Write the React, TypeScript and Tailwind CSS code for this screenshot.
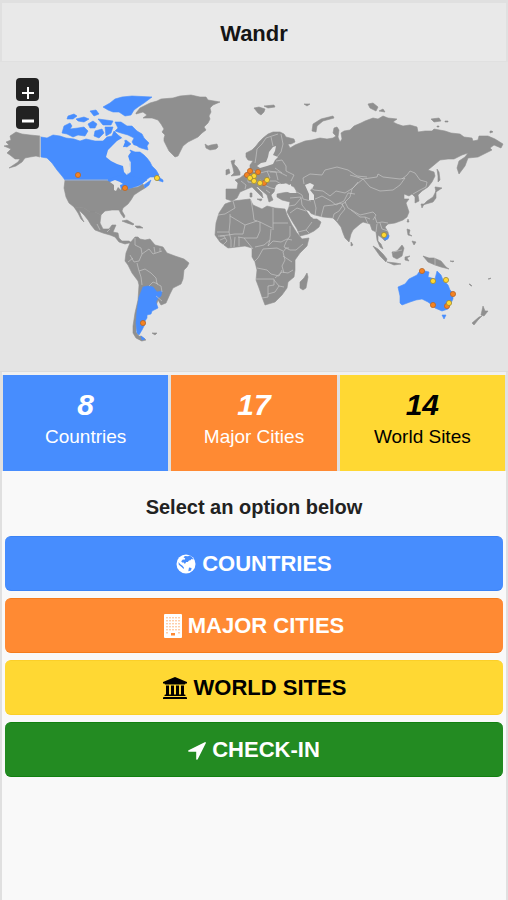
import React from 'react';

const BLUE = '#478dfe';
const ORANGE = '#ff8a33';
const YELLOW = '#ffd833';

const land: string[] = [
  // Alaska
  'M4 146L9 145 6 142 11 140 10 136 16 132 22 134 30 135 40 136 40 157 36 156 30 157 25 158 22 162 16 166 9 168 18 162 20 159 15 159 10 155 7 153 11 149z',
  // United States
  'M65 180L107 180 112 181 115 186 119 187 122 186 126 189 132 188 138 187 143 184 145 188 140 191 134 195 131 200 128 204 123 208 122 211 125 216 124 218 121 214 119 210 112 210 105 211 101 215 95 212 90 212 84 208 74 207 69 203 66 197 64 188z',
  // Mexico and Central America
  'M74 207L84 208 90 212 95 212 101 215 100 223 103 229 109 229 112 225 116 225 113 232 118 233 119 238 122 241 129 241 132 243 129 243 125 244 119 242 115 237 110 235 103 233 95 230 91 225 88 220 84 215 79 210 81 216 84 222 81 219 78 213z',
  // South America
  'M130 243L135 237 138 237 140 239 145 240 150 239 155 245 163 247 167 253 175 256 184 259 189 263 187 267 184 270 183 279 181 284 173 288 170 294 166 303 161 305 158 300 156 306 140 312 137 320 136 332 139 336 142 341 136 338 133 333 133 326 135 313 138 300 139 285 138 281 132 273 128 265 125 261 126 253z',
  // Tierra del Fuego
  'M136 337L141 336 146 340 142 341z',
  // Greenland
  'M136 113L140 108 146 105 150 103 157 101 161 99 173 98 180 96 191 95 200 97 206 97 208 100 220 102 213 105 210 108 211 112 209 116 210 119 208 123 204 127 206 130 202 133 198 137 192 140 188 142 183 146 181 150 178 156 175 157 172 154 169 151 167 147 164 141 164 138 165 135 162 132 164 129 161 124 158 120 152 118 143 118 147 115 143 112 136 114z',
  // Iceland
  'M205 144L208 146 211 145 217 144 218 147 216 149 210 150 206 148z',
  // Eurasia
  'M248 160L246 157 246 153 252 150 256 146 259 142 263 138 268 134 273 132 280 132 284 134 286 137 294 139 295 142 291 144 288 144 290 148 295 145 300 143 305 141 312 140 320 138 327 139 333 138 336 136 333 133 334 128 337 127 339 130 338 137 340 142 342 139 341 133 344 131 350 130 354 126 361 123 365 121 373 118 378 119 383 116 388 118 397 119 393 122 397 124 403 126 410 125 417 127 418 132 425 131 432 131 434 129 445 131 451 133 460 134 464 137 472 138 473 141 478 140 479 136 488 136 495 139 503 144 501 148 494 145 490 148 492 150 486 153 478 157 468 158 465 166 459 174 457 168 459 161 465 157 468 153 462 155 454 159 448 159 440 160 434 165 428 170 434 172 435 176 432 182 428 187 422 191 418 195 419 201 415 203 415 197 412 194 409 196 404 194 404 199 409 199 406 203 408 209 409 212 407 217 403 220 395 223 388 224 385 227 388 232 389 237 385 241 382 238 378 235 378 241 381 244 383 249 380 247 377 240 376 232 372 230 370 224 363 222 360 224 353 230 351 234 349 242 345 238 343 233 341 227 337 222 333 218 323 217 315 215 310 213 313 219 317 219 321 222 319 227 314 231 308 234 300 236 297 229 292 221 287 212 289 207 290 202 282 200 277 197 277 194 282 193 288 192 297 192 294 187 286 183 276 185 274 192 271 195 273 200 269 202 267 195 261 190 258 187 256 187 262 193 263 198 258 193 252 187 247 189 240 192 237 198 232 201 226 199 226 189 237 189 238 183 235 180 240 178 245 174 250 171 250 165 253 161z',
  // United Kingdom and Ireland
  'M231 161L235 160 234 164 237 167 240 172 240 175 231 176 234 173 233 168z',
  'M226 170L229 169 230 173 226 175z',
  // Italian islands
  'M250 193L252 193 252 197 250 197z',
  'M257 199L262 199 261 201z',
  // Africa
  'M225 204L233 201 250 199 253 205 262 209 267 206 275 208 285 209 287 215 292 225 297 233 302 239 309 238 307 246 300 253 295 260 295 270 294 277 288 282 287 288 282 295 275 302 265 305 262 297 259 288 256 280 257 270 255 262 252 257 252 248 245 246 237 247 228 248 220 242 215 235 216 223 219 213z',
  // Madagascar
  'M307 273L308 277 306 288 303 290 300 288 300 282 304 278z',
  // Svalbard and Arctic islands
  'M254 108L259 107 265 109 264 112 261 115 258 113z',
  'M264 106L274 105 275 107 268 108z',
  'M304 104L310 104 307 106z',
  'M312 131L313 124 321 119 333 116 334 118 323 121 317 126 316 132z',
  'M368 104L373 103 378 107 376 111 370 108z',
  'M379 111L383 109 385 112z',
  'M431 119L439 118 441 121 434 122z',
  'M445 121h3v1h-3zM437 126h2v1h-2zM490 131l2 0 1 1-3 1z',
  // Japan and Sakhalin
  'M437 169L439 172 440 180 438 182 438 176z',
  'M436 187L442 188 439 190 436 192 435 187z',
  'M436 191L436 198 433 202 426 204 423 205 427 201 433 197z',
  'M421 204L424 204 422 208z',
  // South-east Asia
  'M373 246L378 249 383 254 387 259 386 262 380 256z',
  'M387 262L396 263 401 264 394 265z',
  'M392 252L397 251 402 245 404 248 402 256 397 259 393 257z',
  'M405 257L410 256 407 258 409 261 405 260z',
  'M407 229L410 230 409 234 412 236 408 235z',
  'M412 241L416 242 414 245z',
  'M423 256L429 258 434 258 441 261 446 267 449 269 441 267 435 265 428 262z',
  'M408 219L409 222 407 222z',
  'M351 242L353 245 351 246z',
  // New Zealand and the Pacific
  'M472 323L479 317 482 316 478 320 474 325z',
  'M483 306L485 311 488 311 484 316 481 315z',
  'M469 284h1l2 2h-1zM488 279l3-1-1 1zM450 261l4 0-1 1z',
  // Caribbean
  'M122 221L127 220 134 224 133 225 127 223z',
  'M135 226L140 226 143 228 137 228z',
  // Falklands
  'M152 333L157 333 155 335z',
];

const visited: string[] = [
  // Canada mainland
  'M41 137L47 138 53 135 60 136 66 138 74 139 80 141 86 139 95 141 103 141 107 137 112 136 114 131 118 135 122 138 120 142 126 144 122 150 130 160 127 175 131 172 131 162 128 157 130 150 135 152 140 152 144 155 147 158 150 162 152 166 156 170 159 175 155 177 150 177 146 180 142 184 138 186 130 188 124 190 120 186 114 183 107 180 65 180 62 176 57 170 52 163 47 158 41 157z',
  'M107 180L117 176 131 176 142 179 147 180 140 184 131 188 121 188 114 183z',
  // Ellesmere
  'M103 107L110 103 115 99 122 97 132 96 152 97 144 103 138 107 134 110 131 115 125 116 119 112 113 112 108 110z',
  // Baffin
  'M115 122L121 122 127 126 132 126 137 131 142 134 144 138 149 143 147 146 148 150 141 148 134 145 132 142 134 138 128 135 121 133 115 131 118 128z',
  // Victoria and Banks
  'M62 133L64 126 70 123 72 126 70 129 78 128 84 127 88 131 85 136 78 135 73 137 67 134z',
  // smaller islands
  'M68 116L74 114 77 116 73 119 67 119z',
  'M76 119L84 117 89 119 84 122 78 121z',
  'M90 111L96 110 99 114 94 116z',
  'M88 124L93 121 97 124 95 128 90 128z',
  'M98 119L106 120 113 121 111 125 103 125z',
  'M95 131L102 129 104 133 99 138 94 136z',
  'M105 127L113 127 111 133 106 136z',
  'M121 143L126 140 131 144 127 147 122 146z',
  // Newfoundland and Nova Scotia
  'M154 176L158 175 160 178 163 180 163 182 157 180z',
  'M144 185L151 180 149 185 145 188z',
  // Argentina
  'M143 287L148 286 153 287 157 292 162 291 161 296 158 298 156 302 158 308 152 311 151 314 147 315 147 318 145 321 145 324 142 330 139 335 137 333 136 323 137 310 139 297z',
  'M141 336L145 339 142 340z',
  // Australia
  'M398 287L405 284 409 279 413 277 417 275 419 272 425 271 429 272 428 277 435 279 437 271 441 275 443 280 448 285 450 290 453 293 453 299 450 305 448 309 442 311 435 308 432 305 428 302 422 299 416 300 410 302 402 305 400 303 400 296z',
  'M442 315L446 315 444 319z',
  // Cambodia
  'M384 236L389 235 388 239 385 240z',
];

const seas: string[] = [
  // Hudson Bay
  'M106 157L108 150 113 145 117 141 122 138 125 142 123 147 127 148 131 152 128 156 130 162 129 170 127 175 124 172 123 166 117 164 111 161z',
  // Great Lakes
  'M110 182L115 180 120 182 123 184 120 185 121 190 118 187 116 191 114 190 114 185z',
  'M132 145L137 146 139 149 134 150z',
  // Baltic
  'M257 166L261 163 266 162 268 157 269 152 273 147 276 146 275 151 273 155 278 157 275 160 273 164 267 166 260 168z',
  // Black Sea
  'M275 188L278 184 285 184 286 187 288 186 291 184 291 187 297 193 290 193 285 191 276 192z',
  // Caspian
  'M305 185L310 183 314 185 312 189 310 190 314 195 314 200 309 200 309 194z',
  // Persian Gulf
  'M306 210L309 211 314 218 311 217z',
];

const borders: string[] = [
  // Europe
  'M255 163L256 157 257 149 262 144 266 138 272 136 278 134',
  'M271 137L273 146M281 134L283 144 281 152 277 157',
  'M241 181L246 185 245 189M248 174L248 182 255 183 261 180M253 171L260 173 268 171 276 172 278 180M267 171L270 178 264 182M276 161L282 160 286 166 286 171 294 175 291 181',
  'M261 181L276 181 281 184M264 185L271 188 276 189M266 190L270 193M275 168L282 173M270 172L279 172 287 176',
  // Central Asia
  'M303 178L310 174 322 175 325 170 337 167 348 170 357 176 367 177',
  'M303 178L304 184M358 182L353 188 345 193 336 191 330 196 323 191 314 190 311 188',
  'M315 199L322 196 331 201 336 205 344 201 348 193 355 194',
  'M314 200L316 208 315 216M321 217L324 206 333 205 340 203 343 205 339 211 334 214 333 218',
  'M337 221L340 215 345 209 342 204 346 202',
  'M345 202L348 208 360 215 373 212 376 215 373 220M351 210L360 217 365 217 368 224M365 217L370 219',
  // China and Mongolia
  'M350 175L357 177 363 179 377 177 378 174 383 177 400 179 405 178 400 185 393 190 380 191 370 187 363 179 357 184 352 189 350 197 345 202',
  'M402 179L407 175 410 171 415 173 420 180 427 182 426 187 420 190 413 194',
  'M375 217L377 223 382 222 388 223M380 223L382 229 388 231M377 224L376 232',
  // Middle East
  'M290 198L301 197 302 205 306 210M297 192L302 195 303 199 311 201M289 206L295 205 301 198M290 213L297 208 306 211M298 232L306 230 312 222M306 230L309 233',
  // Africa
  'M233 201L235 208 225 214 218 215M230 214L230 222 229 232 217 232M230 216L245 225 257 221M251 200L253 212 254 220 260 222 272 228M273 208L273 230M273 223L288 223M245 225L243 234 235 234 228 235 220 236',
  'M260 222L260 231 257 238 244 238 238 237M271 229L270 240 264 245 255 247M270 240L268 246 273 241 281 242 287 239 292 240',
  'M290 226L290 236 286 242 284 247 290 250 296 250 303 244M289 248L286 248 283 252 285 260 282 266 284 273M283 256L292 262M263 249L258 258 254 262M263 249L277 248 283 251M257 268L267 270 271 274 279 276 282 270',
  'M256 279L274 279 274 285 268 286 268 297 262 298M274 280L279 286 275 292 268 294M279 286L284 287M275 278L282 272 288 273 293 270',
  'M218 236L224 236 227 241 223 245M229 232L231 240 231 247M235 237L234 247M239 237L239 246M244 238L253 249M220 240L225 238',
  // South America
  'M135 238L135 245 141 248 142 254 139 261 134 262 130 255M142 254L149 249 153 254 162 251M154 247L155 253M160 248L160 252M137 263L139 271 145 269 151 273 156 278 157 284 161 286 162 292M142 285L141 277 139 271M149 286L153 282 158 284M156 296L162 301M128 262L133 258',
  // North America
  'M40 136V157M65 180H108M97 224L100 230M107 232L110 229',
  // South-east Asia
  'M393 252L402 250M435 258L435 265',
];

const pins = [
  { x: 78, y: 175, kind: 'city' },
  { x: 125, y: 188, kind: 'city' },
  { x: 143, y: 323, kind: 'city' },
  { x: 157, y: 178, kind: 'site' },
  { x: 247, y: 175, kind: 'city' },
  { x: 250, y: 171, kind: 'city' },
  { x: 258, y: 172, kind: 'city' },
  { x: 254, y: 176, kind: 'site' },
  { x: 250, y: 178, kind: 'site' },
  { x: 264, y: 183, kind: 'city' },
  { x: 254, y: 181, kind: 'site' },
  { x: 260, y: 183, kind: 'site' },
  { x: 267, y: 180, kind: 'site' },
  { x: 384, y: 235, kind: 'site' },
  { x: 422, y: 271, kind: 'city' },
  { x: 433, y: 281, kind: 'site' },
  { x: 446, y: 280, kind: 'site' },
  { x: 453, y: 294, kind: 'city' },
  { x: 433, y: 305, kind: 'city' },
  { x: 447, y: 306, kind: 'city' },
  { x: 449, y: 303, kind: 'site' },
];

const GlobeIcon = () => (
  <svg viewBox="0 0 20 20" className="h-5 w-5" aria-hidden="true">
    <circle cx="10" cy="10" r="9.5" fill="white" />
    <path
      fill={BLUE}
      d="M9 2l3 .3 1.500-.8 2.500 1.500 1.500 2.500-2-.5-1 1.200-1.500.3-1.200 1.600-1.600-.2-1.300 2-1.200-1.500-1.500.2-1-1.400 1.700-1.800 1.600.4.8-1.300-1.800-1.200z"
    />
    <path fill={BLUE} d="M2.500 8l1.800 2.200 2.200 1.500 1.500 2-.4 1.200-2-2-2.800-2.200zM13 13.500l2.600.6-.6 2.400-2.700.8z" />
  </svg>
);

const BuildingIcon = () => (
  <svg viewBox="0 0 18 24" className="h-6 w-[18px]" aria-hidden="true">
    <rect width="18" height="24" rx="1" fill="white" />
    {[3, 6, 9, 12, 15].map((y) =>
      [3, 6, 9, 12, 15].map((x) => (
        <rect key={`${x}-${y}`} x={x - 0.7} y={y} width="1.4" height="1.4" fill={ORANGE} opacity="0.6" />
      ))
    )}
    <path d="M2.300 18h1.400v1.400H2.300zM14.300 18h1.400v1.400h-1.400z" fill={ORANGE} opacity="0.6" />
    <rect x="7" y="19" width="4" height="2.500" fill={ORANGE} />
  </svg>
);

const MuseumIcon = () => (
  <svg viewBox="0 0 26 24" className="h-6 w-[26px]" aria-hidden="true">
    <path
      fill="black"
      d="M13 1l12 5v1.500h-1.500q0 1-1 1h-19q-1 0-1-1H1V6zM4 9.500h3v9h2v-9h3v9h2v-9h3v9h2v-9h3v9h.5q1 0 1 1v.5h-21v-.5q0-1 1-1H4zM2 21h22q1 0 1 1v1H1v-1q0-1 1-1z"
    />
  </svg>
);

const ArrowIcon = () => (
  <svg viewBox="180 100 1430 1570" className="h-5 w-[18px]" aria-hidden="true">
    <path
      fill="white"
      d="M1593 349l-640 1280q-17 35-57 35-5 0-15-2-22-5-35.500-22.500t-13.500-39.500v-576h-576q-22 0-39.500-13.500t-22.500-35.500 4-42 29-30l1280-640q13-7 29-7 27 0 45 19 15 14 18.500 34.500t-6.500 39.500z"
    />
  </svg>
);

const stats = [
  { value: 8, label: 'Countries', className: 'bg-[#478dfe] text-white' },
  { value: 17, label: 'Major Cities', className: 'bg-[#ff8a33] text-white' },
  { value: 14, label: 'World Sites', className: 'bg-[#ffd833] text-black' },
];

const options = [
  { label: 'COUNTRIES', Icon: GlobeIcon, className: 'bg-[#478dfe] border-[#3b83f5] text-white' },
  { label: 'MAJOR CITIES', Icon: BuildingIcon, className: 'bg-[#ff8a33] border-[#f57c1c] text-white' },
  { label: 'WORLD SITES', Icon: MuseumIcon, className: 'bg-[#ffd833] border-[#fbcf28] text-black' },
  { label: 'CHECK-IN', Icon: ArrowIcon, className: 'bg-[#238b22] border-[#118010] text-white' },
];

const WorldMap: React.FC = () => (
  <svg viewBox="0 62 508 309" className="block w-full" role="img" aria-label="World map">
    <g fill="#8f8f8f" stroke="#8f8f8f" strokeWidth="0.6" strokeLinejoin="round">
      {land.map((d) => (
        <path key={d} d={d} />
      ))}
    </g>
    <g fill={BLUE} stroke={BLUE} strokeWidth="0.6" strokeLinejoin="round">
      {visited.map((d) => (
        <path key={d} d={d} />
      ))}
    </g>
    <g fill="#e4e4e4">
      {seas.map((d) => (
        <path key={d} d={d} />
      ))}
    </g>
    <g fill="none" stroke="#c4c4c4" strokeWidth="0.7" strokeLinejoin="round">
      {borders.map((d) => (
        <path key={d} d={d} />
      ))}
    </g>
    <g strokeWidth="0.8">
      {pins.map((pin) => (
        <circle
          key={`${pin.x}-${pin.y}`}
          cx={pin.x}
          cy={pin.y}
          r="2.6"
          fill={pin.kind === 'city' ? '#f58220' : YELLOW}
          stroke={pin.kind === 'city' ? '#b5672c' : '#a08a35'}
        />
      ))}
    </g>
  </svg>
);

const zoomButton = 'flex h-[23px] w-[23px] items-center justify-center rounded bg-[#222]';

export default function App() {
  return (
    <div className="min-h-screen border-x-2 border-t-3 border-[#e0e0e0] bg-[#f9f9f9] font-['Liberation_Sans',Arial,sans-serif]">
      <header className="border-b border-[#e0e0e0] bg-[#e9e9e9] pt-[18px] pb-3.5">
        <h1 className="text-center text-[22px] leading-[26px] font-bold text-[#151515]">Wandr</h1>
      </header>

      {/* Map */}
      <div className="relative -mx-0.5 border-b border-[#dcdcdc] bg-[#e4e4e4]">
        <WorldMap />
        <div className="absolute top-4 left-4 flex flex-col gap-[5px]">
          <button type="button" aria-label="Zoom in" className={zoomButton}>
            <svg viewBox="0 0 14 14" className="mt-1.5 h-3.5 w-3.5" aria-hidden="true">
              <path d="M7 1v12M1 7h12" stroke="white" strokeWidth="2" />
            </svg>
          </button>
          <button type="button" aria-label="Zoom out" className={zoomButton}>
            <svg viewBox="0 0 14 14" className="mt-1.5 h-3.5 w-3.5" aria-hidden="true">
              <path d="M1 7h12" stroke="white" strokeWidth="3" />
            </svg>
          </button>
        </div>
      </div>

      {/* Totals */}
      <div className="border-t-3 border-[#f0f0f0] bg-[#e0e0e0] px-px">
        <div className="grid grid-cols-3 gap-[3px]">
          {stats.map((stat) => (
            <div key={stat.label} className={`pt-3.5 pb-[22px] text-center ${stat.className}`}>
              <div className="text-[30px] leading-8 font-bold italic">{stat.value}</div>
              <div className="mt-1 text-[19px] leading-6">{stat.label}</div>
            </div>
          ))}
        </div>
      </div>

      <h2 className="pt-[22px] text-center text-xl leading-7 font-bold text-[#222]">
        Select an option below
      </h2>

      {/* Options */}
      <nav className="mt-[15px] flex flex-col gap-[7px] px-[3px]">
        {options.map(({ label, Icon, className }) => (
          <button
            key={label}
            type="button"
            className={`flex h-[55px] items-center justify-center gap-1.5 rounded-md border-y text-[22px] font-bold ${className}`}
          >
            <Icon />
            <span>{label}</span>
          </button>
        ))}
      </nav>
    </div>
  );
}
